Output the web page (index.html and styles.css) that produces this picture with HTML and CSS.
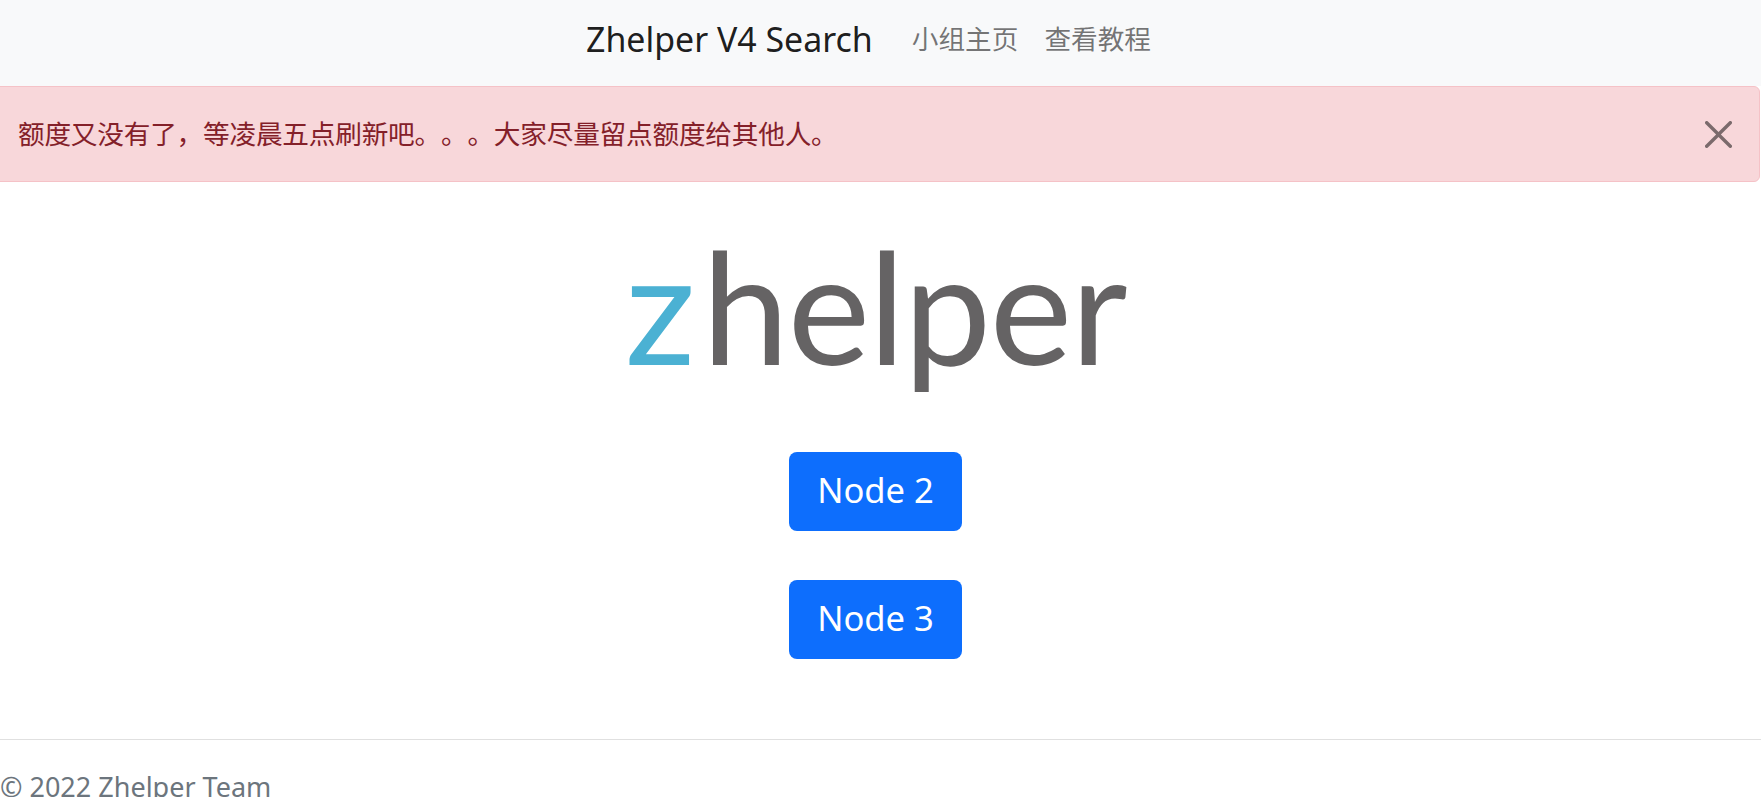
FILE: index.html
```html
<!DOCTYPE html>
<html lang="zh-CN">
<head>
    <meta charset="UTF-8">
    <title>Zhelper V4 Search</title>
    <link rel="stylesheet" href="styles.css">
</head>
<body>
    <!-- Navbar -->
    <nav class="navbar">
        <a class="brand" href="#">Zhelper V4 Search</a>
        <div class="nav-links">
            <a href="#">小组主页</a>
            <a href="#">查看教程</a>
        </div>
    </nav>

    <!-- Alert -->
    <div class="alert">
        <span class="alert-text">额度又没有了，等凌晨五点刷新吧。。。大家尽量留点额度给其他人。</span>
        <button class="btn-close" aria-label="Close">
            <svg viewBox="0 0 16 16" width="27" height="27"><path d="M.293.293a1 1 0 011.414 0L8 6.586 14.293.293a1 1 0 111.414 1.414L9.414 8l6.293 6.293a1 1 0 01-1.414 1.414L8 9.414l-6.293 6.293a1 1 0 01-1.414-1.414L6.586 8 .293 1.707a1 1 0 010-1.414z"/></svg>
        </button>
    </div>

    <!-- Logo and nodes -->
    <main class="content">
        <div class="logo"><span class="logo-z">z</span>helper</div>
        <a class="btn" href="#">Node 2</a>
        <a class="btn" href="#">Node 3</a>
    </main>

    <!-- Footer -->
    <hr class="divider">
    <footer class="footer">© 2022 Zhelper Team</footer>
</body>
</html>
```

FILE: styles.css
```css
/* General */
html, body {
    height: 100%;
    overflow: hidden;
}

body {
    margin: 0;
    font-family: "Noto Sans", "Noto Sans CJK SC", sans-serif;
    font-size: 26.67px;
    line-height: 40px;
    color: #212529;
    background-color: #fff;
    font-feature-settings: "chws" 0;
    text-spacing-trim: space-all;
}

a {
    text-decoration: none;
}

/* Navbar */
.navbar {
    display: flex;
    justify-content: center;
    align-items: center;
    gap: 39px;
    box-sizing: border-box;
    height: 86px;
    padding: 0 24px 8px 0;
    background-color: #f8f9fa;
}

.brand {
    font-size: 33.9px;
    color: rgba(0, 0, 0, 0.9);
}

.nav-links {
    display: flex;
    gap: 26px;
}

.nav-links a {
    color: rgba(0, 0, 0, 0.55);
}

/* Alert */
.alert {
    display: flex;
    justify-content: space-between;
    align-items: center;
    box-sizing: border-box;
    height: 96px;
    margin: 0 1px 0 -9px;
    padding: 0 27px 0 26px;
    background-color: #f8d7da;
    border: 1px solid #f5c2c7;
    border-radius: 6px;
    color: #842029;
}

.alert-text {
    letter-spacing: -0.22px;
}

.btn-close {
    display: flex;
    padding: 0;
    border: none;
    background: none;
    opacity: 0.5;
}

/* Logo and nodes */
.content {
    display: flex;
    flex-direction: column;
    align-items: center;
    padding-right: 10px;
}

.logo {
    margin-top: 23px;
    height: 247px;
    font-family: "Lato", sans-serif;
    font-size: 156px;
    letter-spacing: -1.5px;
    line-height: 200px;
    color: #656364;
}

.logo-z {
    margin-right: 8px;
    color: #4bb1d3;
}

.btn {
    display: block;
    box-sizing: border-box;
    width: 173px;
    height: 79px;
    margin-bottom: 49px;
    border-radius: 8px;
    background-color: #0d6efd;
    color: #fff;
    font-size: 34.6px;
    line-height: 76px;
    text-align: center;
}

/* Footer */
.divider {
    height: 1px;
    margin: 31px 0 0 0;
    border: none;
    background-color: #e0e0e0;
}

.footer {
    padding-top: 27px;
    font-size: 27px;
    color: #6c757d;
}
```
